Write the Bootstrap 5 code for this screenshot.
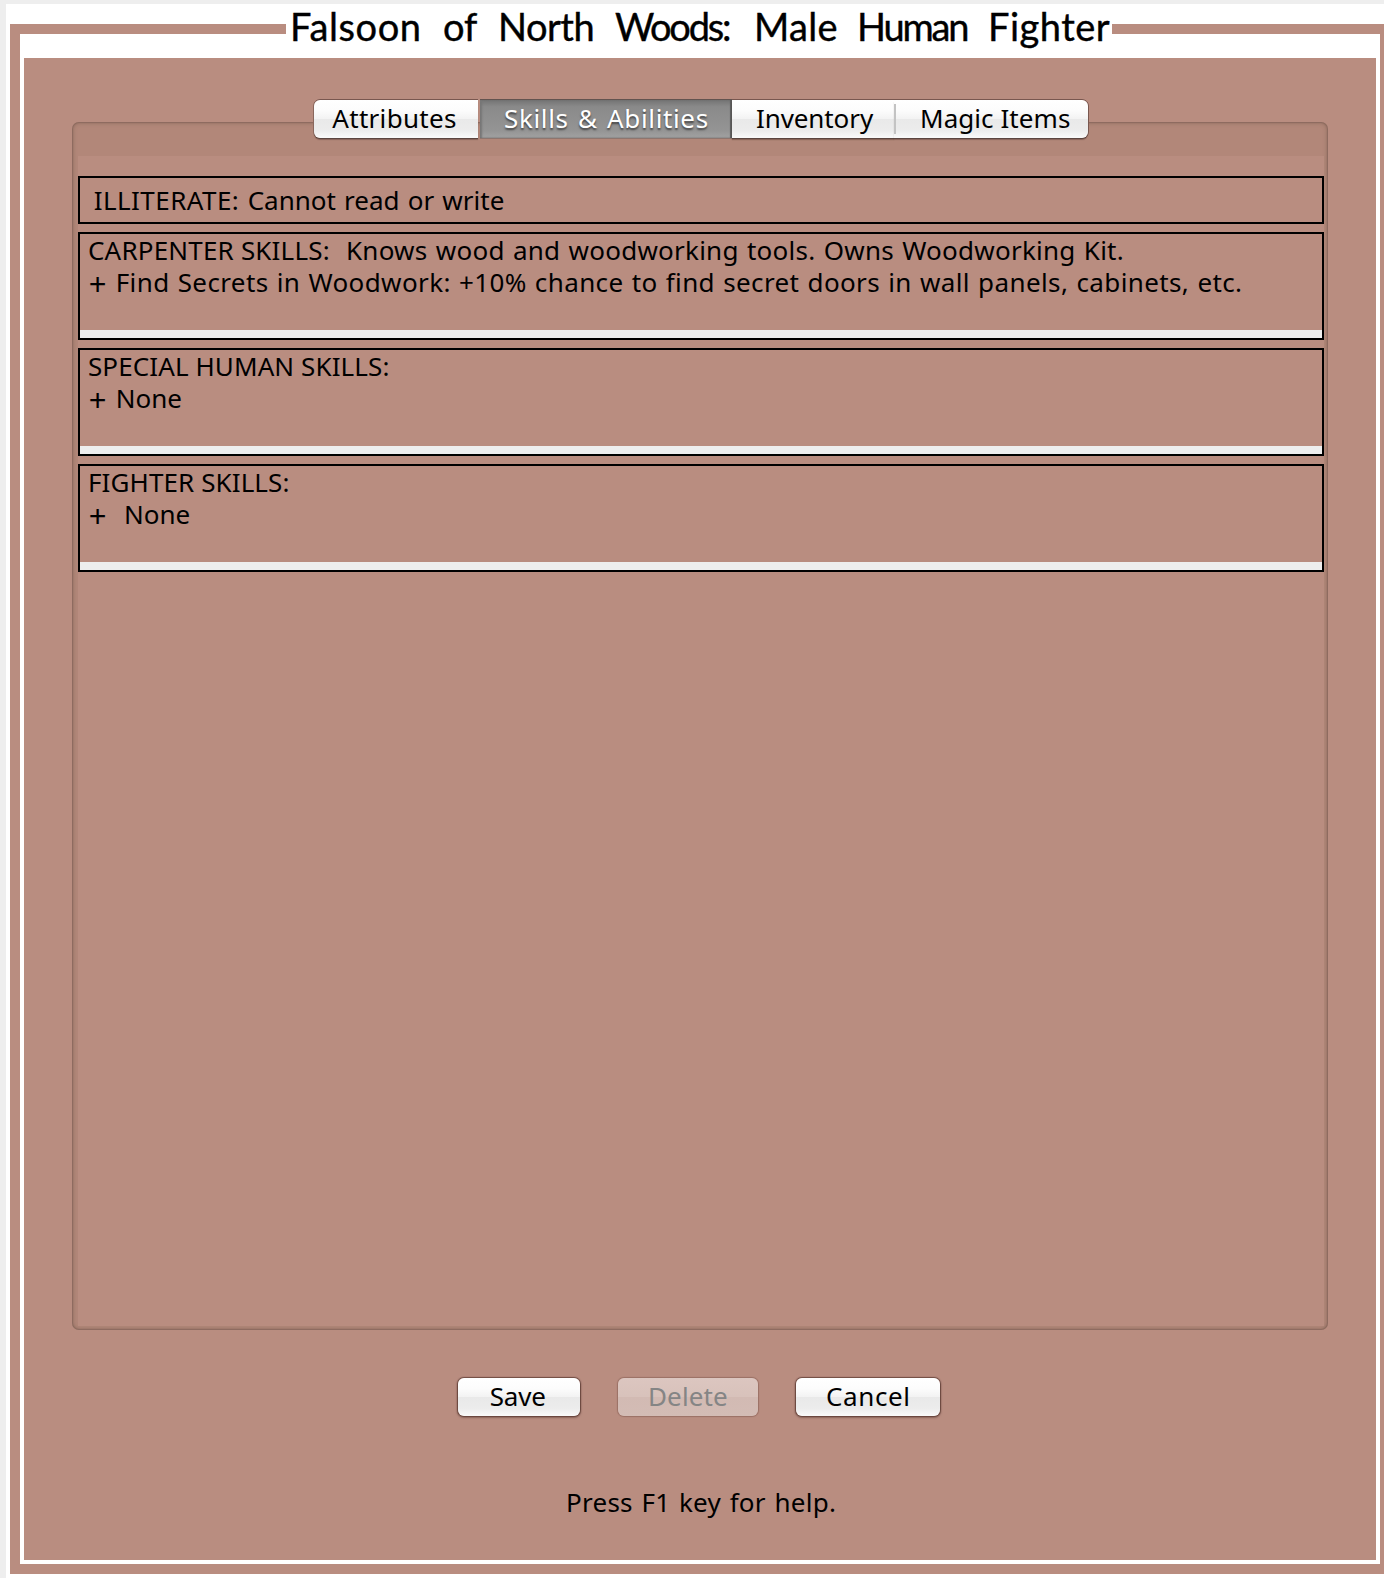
<!DOCTYPE html>
<html lang="en">
<head>
<meta charset="utf-8">
<meta name="viewport" content="width=device-width, initial-scale=1">
<title>Falsoon of North Woods</title>
<link href="https://cdn.jsdelivr.net/npm/bootstrap@5.3.0/dist/css/bootstrap.min.css" rel="stylesheet">
<style>
  :root { --clay: #b98d80; }
  body { background: #eee; color: #000; font: 26px/32px "Noto Sans", sans-serif; width: 1384px; height: 1578px; }
  .sheet { margin: 4px 0 0 6px; padding-left: 4px; height: 1574px; }
  .ring { width: 1374px; height: 1550px; margin-top: 20px; border: 10px solid var(--clay); border-width: 10px 4px 10px 10px; }
  .inner-area { border: 4px solid #fff; border-top-width: 24px; background: var(--clay); padding: 64px 48px 0; }
  .title-text { position: absolute; left: 286px; top: 4px; width: 826px; height: 53px; padding-left: 4px; font: 38px/44px Lato, sans-serif; -webkit-text-stroke: .4px #000; white-space: nowrap; }
  .title-text span { flex: none; }
  .t1 { width: 153px; letter-spacing: .6px; } .t2 { width: 55px; letter-spacing: -.2px; }
  .t3 { width: 117px; letter-spacing: -.5px; } .t4 { width: 139px; letter-spacing: -2.2px; }
  .t5 { width: 103px; letter-spacing: .3px; } .t6 { width: 131px; letter-spacing: -2.2px; }
  .t7 { letter-spacing: .5px; }
  .panel { height: 1208px; border-radius: 7px; padding: 34px 4px 4px 6px; background: #b28779;
    box-shadow: inset 0 0 1px 1px rgba(90,70,60,.28), inset 0 0 4px 1px rgba(90,70,60,.34); }
  .panel-body { background: var(--clay); padding-top: 20px; }
  .tab-strip { position: absolute; left: 314px; top: 100px; width: 774px; height: 38px; }
  .tab-strip .btn, .actions .btn { font: inherit; color: #000; border: 0; height: 38px; text-align: left; white-space: nowrap;
    background: linear-gradient(#fff 0, #fcfcfc 28%, #f3f3f3 49%, #e9e9e9 51%, #ececec 80%, #fafafa 100%);
    box-shadow: 0 0 1px 1px rgba(85,52,45,.7), 0 1px 2px 1px rgba(60,35,30,.35); padding: 0; line-height: 32px; border-radius: 6px; padding-top: 2px; padding-bottom: 4px; }
  .tab-strip .btn { flex: none; box-shadow: 0 -1px 0 #79574f, 0 1px 0 #5b453f, 0 2px 1px rgba(60,35,30,.35); border-radius: 0; }
  .tab-strip .tab-a { width: 164px; margin-right: 2px; padding-left: 18.3px; border-radius: 6px 0 0 6px; letter-spacing: .3px;
    box-shadow: 0 -1px 0 #79574f, 0 1px 0 #5b453f, -1px 0 0 #8a675d, 0 2px 1px rgba(60,35,30,.35); }
  .tab-strip .tab-b { width: 252px; padding-left: 24px; letter-spacing: .64px; word-spacing: 2px; color: #fff; text-shadow: 0 2px 2px #444;
    background: linear-gradient(#747474, #8a8a8a 18%, #949494 80%, #a2a2a2);
    box-shadow: inset -2px 0 1px #5a5a5a, inset 2px 0 2px #777, 0 -1px 0 #62534f, 0 1px 0 #8e756e; }
  .tab-strip .tab-c { width: 162px; padding-left: 24px; letter-spacing: -.1px; }
  .tab-strip .tab-d { width: 194px; padding-left: 26px; border-radius: 0 6px 6px 0; letter-spacing: .06px;
    box-shadow: 0 -1px 0 #79574f, 0 1px 0 #5b453f, 1px 0 0 #79574f, 0 2px 1px rgba(60,35,30,.35); }
  .tab-d::before { content: ""; position: absolute; left: 0; top: 4px; width: 2px; height: 30px; background: #c3c3c3; }
  .skill-box { border: 2px solid #000; height: 108px; margin-bottom: 8px; }
  .skill-box.one-line { height: 48px; padding: 6px 0 0 13.7px; }
  .skill-text { flex: 1; padding-left: 8px; white-space: nowrap; }
  .strip { height: 8px; background: #eee; }
  .lead-in { display: inline-block; }
  .plus { display: inline-block; width: 27.7px; padding-left: .8px; font-size: 31px; line-height: 34px; height: 32px; }
  .skill-row { height: 32px; }
  .actions { padding-top: 48px; margin-left: 386px; }
  .actions .btn.b-save { width: 122px; margin-right: 38px; padding-left: 31.7px; letter-spacing: -.2px; }
  .actions .btn.b-del { width: 140px; margin-right: 38px; padding-left: 30px; letter-spacing: .12px; opacity: 1; color: #858585;
    background: linear-gradient(#dcc6c0, #d8c2bb 49%, #d2bab3 51%, #d3bcb5); box-shadow: 0 0 1px 1px rgba(110,70,60,.4); }
  .actions .btn.b-can { width: 144px; padding-left: 30px; letter-spacing: .6px; }
  .help { padding-top: 70px; padding-left: 494px; letter-spacing: .26px; word-spacing: 1.6px; white-space: nowrap; }
</style>
<script src="https://cdn.jsdelivr.net/npm/bootstrap@5.3.0/dist/js/bootstrap.bundle.min.js"></script>
</head>
<body class="overflow-hidden position-relative">
<div class="sheet bg-white d-flow-root overflow-hidden">
  <div class="ring d-flex">
    <main class="inner-area flex-grow-1">
      <section class="panel d-flex">
        <div class="panel-body flex-grow-1">
          <div class="skill-box one-line"><span class="lead-in" style="letter-spacing:.45px;width:154px">ILLITERATE:</span><span style="word-spacing:1.4px">Cannot read or write</span></div>
          <div class="skill-box d-flex flex-column">
            <div class="skill-text">
              <div class="skill-row"><span class="lead-in" style="letter-spacing:.187px;width:258px">CARPENTER SKILLS:</span><span style="letter-spacing:.24px;word-spacing:1.3px">Knows wood and woodworking tools. Owns Woodworking Kit.</span></div>
              <div class="skill-row d-flex"><span class="plus">+</span><span style="letter-spacing:.39px;word-spacing:1px">Find Secrets in Woodwork: +10% chance to find secret doors in wall panels, cabinets, etc.</span></div>
            </div>
            <div class="strip"></div>
          </div>
          <div class="skill-box d-flex flex-column">
            <div class="skill-text">
              <div class="skill-row" style="letter-spacing:.1px">SPECIAL HUMAN SKILLS:</div>
              <div class="skill-row d-flex"><span class="plus">+</span><span>None</span></div>
            </div>
            <div class="strip"></div>
          </div>
          <div class="skill-box d-flex flex-column">
            <div class="skill-text">
              <div class="skill-row" style="letter-spacing:.1px">FIGHTER SKILLS:</div>
              <div class="skill-row d-flex"><span class="plus" style="width:35.9px">+</span><span>None</span></div>
            </div>
            <div class="strip"></div>
          </div>
        </div>
      </section>
      <div class="actions d-flex">
        <button type="button" class="btn b-save">Save</button>
        <button type="button" class="btn b-del" disabled>Delete</button>
        <button type="button" class="btn b-can">Cancel</button>
      </div>
      <div class="help">Press F1 key for help.</div>
    </main>
  </div>
</div>
<h1 class="title-text bg-white d-flex m-0"><span class="t1">Falsoon</span><span class="t2">of</span><span class="t3">North</span><span class="t4">Woods:</span><span class="t5">Male</span><span class="t6">Human</span><span class="t7">Fighter</span></h1>
<nav class="tab-strip d-flex">
  <button type="button" class="btn tab-a">Attributes</button>
  <button type="button" class="btn tab-b">Skills &amp; Abilities</button>
  <button type="button" class="btn tab-c">Inventory</button>
  <button type="button" class="btn tab-d position-relative">Magic Items</button>
</nav>
</body>
</html>
